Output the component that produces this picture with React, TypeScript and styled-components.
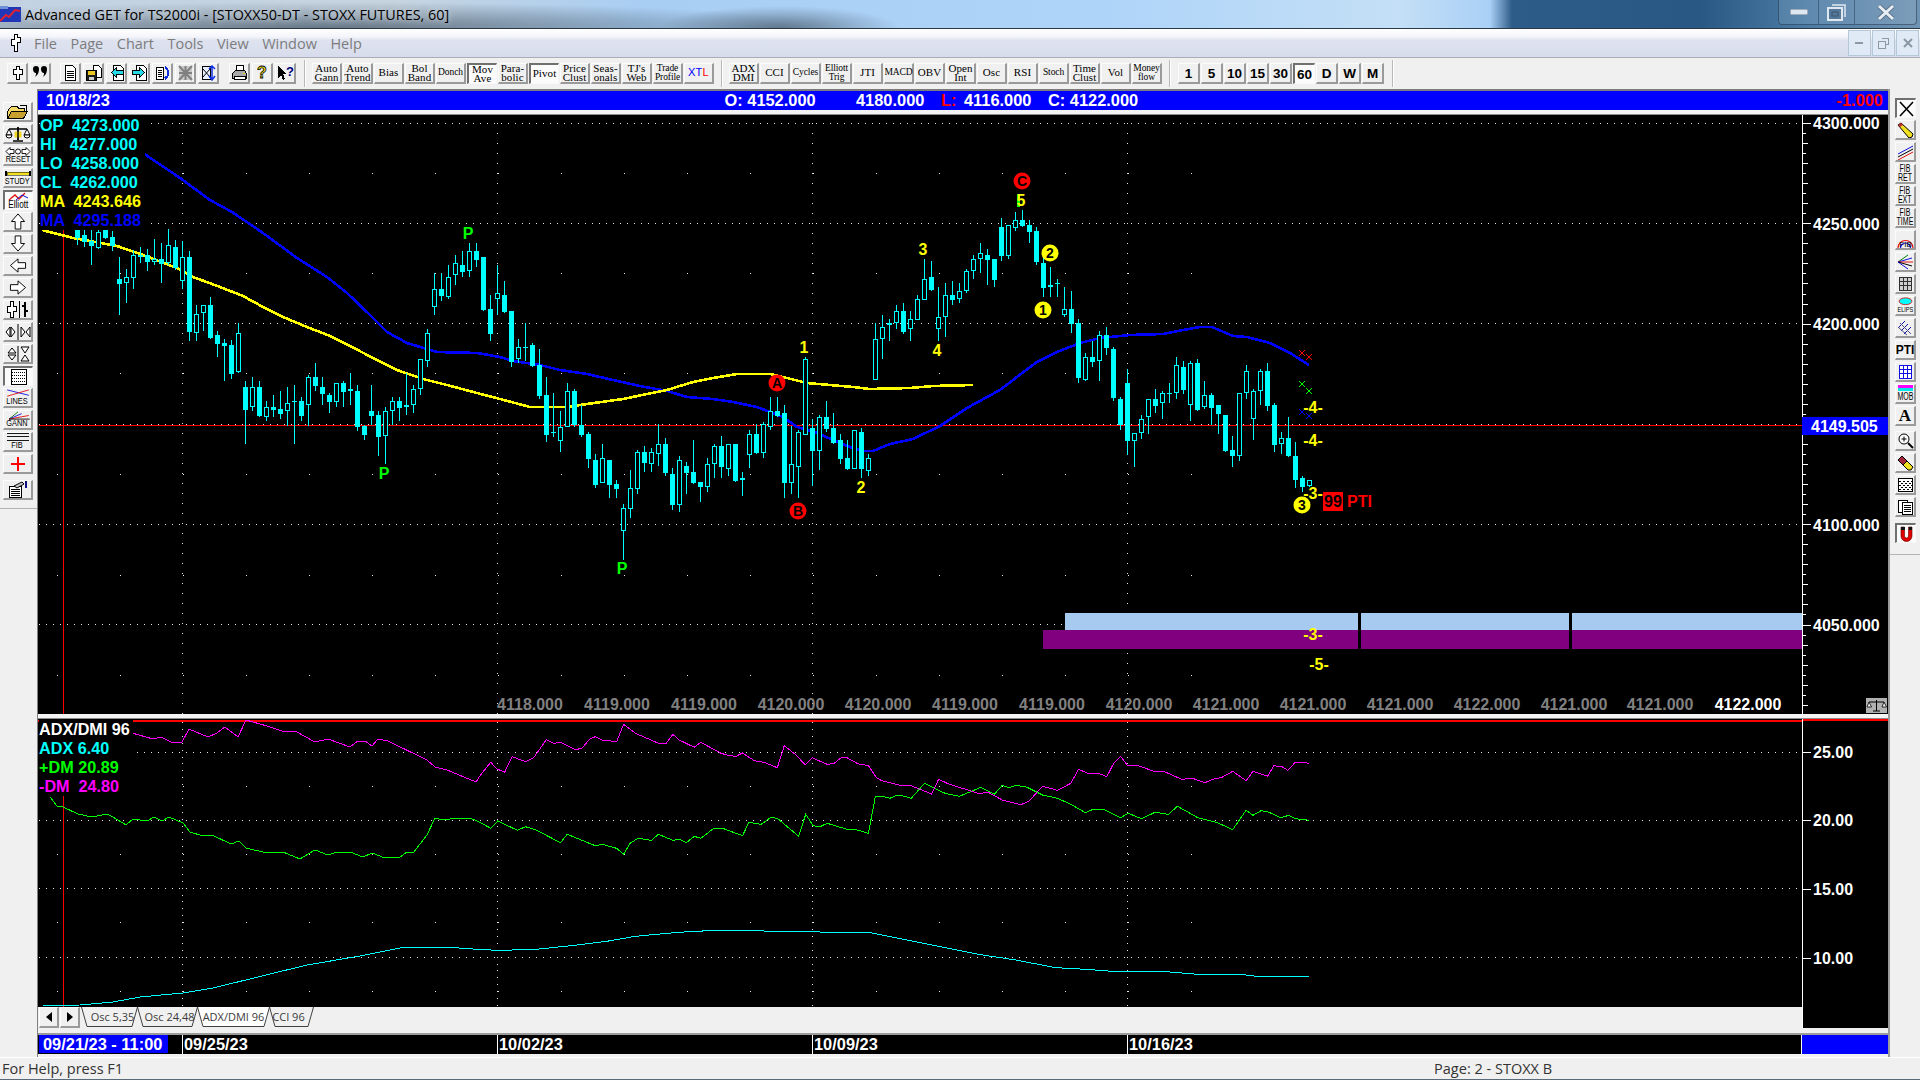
import React from 'react';
import styled, { createGlobalStyle } from 'styled-components';

const GlobalStyle = createGlobalStyle`
  html, body { margin: 0; padding: 0; background: #f0f0f0; overflow: hidden; }
  * { box-sizing: border-box; }
`;

const Shell = styled.div`
  width: 1920px;
  height: 1080px;
  display: flex;
  flex-direction: column;
  overflow: hidden;
  font-family: "Liberation Sans", Arial, sans-serif;
  background: #f0f0f0;
`;

const TitleBar = styled.div`
  height: 29px;
  display: flex;
  align-items: flex-start;
  justify-content: space-between;
  border-bottom: 1px solid #2c3a46;
  background:
    radial-gradient(ellipse 520px 26px at 330px 100%, rgba(70, 88, 105, 0.75), rgba(70, 88, 105, 0) 100%),
    radial-gradient(ellipse 120px 22px at 780px 100%, rgba(70, 88, 105, 0.7), rgba(70, 88, 105, 0) 100%),
    linear-gradient(90deg, #c2d2e2 0, #c6d4e0 400px, #a9cef3 640px, #aed4f9 1100px, #c4dff6 1400px, #a9d0f6 1490px, #2e5c88 1512px, #2a5884 1700px, #4a7aa4 1800px, #6f93b3 1920px);
`;

const TitleLeft = styled.div`
  display: flex;
  align-items: center;
  gap: 4px;
  height: 28px;
`;

const TitleText = styled.span`
  font-family: "Open Sans", sans-serif;
  font-size: 14.4px;
  color: #000;
  text-shadow: 0 0 6px rgba(255, 255, 255, 0.8);
  white-space: nowrap;
`;

const CaptionGroup = styled.div`
  display: flex;
  margin-right: 3px;
  height: 25px;
  border: 1px solid rgba(20, 40, 60, 0.5);
  border-top: none;
  border-radius: 0 0 4px 4px;
  background: rgba(255, 255, 255, 0.1);
`;

const CaptionButton = styled.div<{ $w: number }>`
  width: ${({ $w }) => $w}px;
  display: flex;
  align-items: center;
  justify-content: center;
  & + & { border-left: 1px solid rgba(20, 40, 60, 0.4); }
`;

const MenuBar = styled.div`
  height: 29px;
  display: flex;
  align-items: center;
  padding-left: 8px;
  border-bottom: 1px solid #a8adb6;
  background: linear-gradient(180deg, #ffffff 0, #f4f5fa 28%, #dfe3f0 40%, #d7dcec 100%);
`;

const MenuItems = styled.div`
  display: flex;
  gap: 13.5px;
  margin-left: 9px;
  flex: 1;
`;

const MenuItem = styled.span`
  font-family: "Open Sans", sans-serif;
  font-size: 14.5px;
  color: #7c7c7c;
`;

const MdiButton = styled.div`
  width: 23px;
  height: 26px;
  margin-right: 1px;
  display: flex;
  align-items: center;
  justify-content: center;
  border: 1px solid #b4c8d8;
  background: #dfeaf6;
`;

const ToolBar = styled.div`
  height: 31px;
  display: flex;
  align-items: flex-start;
  padding-top: 5px;
  background: #f0f0f0;
`;

const ToolGroup = styled.div<{ $ml: number; $gap: number }>`
  display: flex;
  gap: ${({ $gap }) => $gap}px;
  margin-left: ${({ $ml }) => $ml}px;
`;

const ToolSep = styled.div<{ $ml: number }>`
  width: 2px;
  height: 27px;
  margin-top: -3px;
  margin-left: ${({ $ml }) => $ml}px;
  border-left: 1px solid #b8b8b8;
  border-right: 1px solid #fff;
`;

const Raised = styled.div<{ $pressed?: boolean }>`
  flex: none;
  display: flex;
  align-items: center;
  justify-content: center;
  flex-direction: column;
  color: #000;
  background: ${({ $pressed }) => ($pressed ? '#fbfbfb' : '#f0f0f0')};
  border-style: solid;
  border-width: ${({ $pressed }) => ($pressed ? '2px 1px 1px 2px' : '1px 2px 2px 1px')};
  border-color: ${({ $pressed }) =>
    $pressed ? '#707070 #f8f8f8 #f8f8f8 #707070' : '#fcfcfc #9a9a9a #9a9a9a #fcfcfc'};
`;

const IconButton = styled(Raised)`
  width: 21px;
  height: 21px;
`;

const TextButton = styled(Raised)<{ $small?: boolean }>`
  width: 30px;
  height: 21px;
  font-family: "Liberation Serif", serif;
  font-size: ${({ $small }) => ($small ? 9.5 : 11)}px;
  line-height: 9.5px;
  text-align: center;
  white-space: pre;
  letter-spacing: ${({ $small }) => ($small ? -0.1 : 0.1)}px;
`;

const NumButton = styled(Raised)`
  width: 22px;
  height: 21px;
  font-size: 13.5px;
  font-weight: 700;
`;

const XtlPart = styled.span<{ $c: string }>`
  color: ${({ $c }) => $c};
  font-family: "Liberation Sans", sans-serif;
  font-size: 11px;
  letter-spacing: 0.3px;
`;

const Body = styled.div`
  flex: 1;
  display: flex;
  min-height: 0;
`;

const SideBar = styled.div<{ $w: number; $pt: number; $pl: number; $h: number }>`
  flex: none;
  width: ${({ $w }) => $w}px;
  height: ${({ $h }) => $h}px;
  padding: ${({ $pt }) => $pt}px 0 0 ${({ $pl }) => $pl}px;
  display: flex;
  flex-direction: column;
  gap: 2px;
  border-bottom: 1px solid #b4b4b4;
`;

const SideButton = styled(Raised)<{ $w: number; $mt?: number }>`
  width: ${({ $w }) => $w}px;
  height: 20px;
  margin-top: ${({ $mt }) => $mt || 0}px;
  font-size: 9px;
  line-height: 9px;
`;

const RightLabel = styled.span`
  display: block;
  font-size: 10px;
  line-height: 8.5px;
  text-align: center;
  white-space: pre;
  transform: scaleX(0.7);
`;

const TinyLabel = styled.span<{ $size?: number }>`
  display: block;
  font-size: ${({ $size }) => $size || 9}px;
  line-height: 9px;
  margin-top: -1px;
  white-space: nowrap;
  transform: scaleX(0.82);
`;

const Center = styled.div`
  width: 1853px;
  display: flex;
  flex-direction: column;
  border-left: 1px solid #808080;
  border-right: 2px solid #9a9a9a;
`;

const InfoBar = styled.div`
  height: 21px;
  display: grid;
  grid-template-columns: 678.5px 131.5px 85px 23px 84px 1fr auto;
  align-items: center;
  padding: 0 5px 0 8px;
  border-top: 2px solid #7c7c7c;
  background: #0000ff;
  color: #fff;
  font-size: 16.4px;
  font-weight: 700;
  white-space: pre;
`;

const RedText = styled.span`
  color: #ff0000;
`;

const PanelGap = styled.div<{ $h: number }>`
  height: ${({ $h }) => $h}px;
  flex: none;
  background: #f4f4f4;
  border-bottom: 1px solid #8c8c8c;
`;

const UpperPanel = styled.div`
  position: relative;
  height: 599px;
  background: #000;
`;

const ChartSvg = styled.svg`
  display: block;
  text {
    font-family: "Liberation Sans", Arial, sans-serif;
    font-size: 16px;
    font-weight: 700;
  }
`;

const Legend = styled.div<{ $w: number; $left: number }>`
  position: absolute;
  left: ${({ $left }) => $left}px;
  top: 0;
  width: ${({ $w }) => $w}px;
  padding-top: 1px;
  background: #000;
  font-size: 16.2px;
  font-weight: 700;
  line-height: 19px;
  white-space: pre;
`;

const LegendRow = styled.div<{ $c: string }>`
  color: ${({ $c }) => $c};
`;

const LowerPanel = styled.div`
  height: 309px;
  display: flex;
  background: #000;
  flex: none;
`;

const LowerPlot = styled.div`
  position: relative;
  width: 1764px;
  display: flex;
  flex-direction: column;
`;

const TabStrip = styled.div`
  height: 21px;
  display: flex;
  align-items: stretch;
  background: #f0f0f0;
  padding-left: 1px;
`;

const TabArrow = styled(Raised)`
  width: 20px;
  height: 21px;
  margin-right: 1px;
`;

const Tab = styled.div<{ $w: number; $shift: number; $active?: boolean }>`
  position: relative;
  width: ${({ $w }) => $w}px;
  margin-right: -1px;
  display: flex;
  align-items: center;
  justify-content: center;
  padding-bottom: 2px;
  font-family: "Open Sans", sans-serif;
  font-size: 11px;
  color: #3a3a3a;
  &:first-of-type { margin-left: 1px; }
  span { position: relative; left: ${({ $shift }) => $shift}px; }
`;

const TabShape = styled.svg`
  position: absolute;
  inset: 0;
  width: 100%;
  height: 100%;
`;

const DateGap = styled.div`
  height: 7px;
  flex: none;
  background: #f0f0f0;
  border-bottom: 2px solid #9c9c9c;
`;

const DateBar = styled.div`
  height: 19px;
  flex: none;
  display: flex;
  background: #000;
  color: #fff;
  font-size: 16.4px;
  font-weight: 700;
  line-height: 19px;
`;

const DateCell = styled.div<{ $w: number }>`
  width: ${({ $w }) => $w}px;
  padding-left: 1px;
  border-left: 1px solid #fff;
  white-space: nowrap;
`;

const DateStart = styled.div`
  width: 144px;
  padding-left: 1px;
`;

const DateStartLabel = styled.span`
  display: inline-block;
  width: 129px;
  height: 18px;
  line-height: 18px;
  padding-left: 4px;
  background: #0000ff;
  white-space: nowrap;
`;

const DateEnd = styled.div`
  flex: 1;
  margin-left: 1px;
  border-left: 1px solid #fff;
  background: #0000ff;
`;

const StatusBar = styled.div`
  height: 23px;
  flex: none;
  position: relative;
  display: flex;
  align-items: center;
  border-top: 1px solid #fff;
  border-bottom: 1px solid #5a6a78;
  background: #f0f0f0;
  font-family: "Open Sans", sans-serif;
  font-size: 14.5px;
  color: #333;
  padding-left: 2px;
`;

const StatusRight = styled.span`
  margin-left: 1311px;
`;

/* ---------- chart data, read off the screen in page pixels ---------- */

type Candle = [number, number, number, number, number];

const rawA: Candle[] = [
  [90,90,115,135,0],[90,105,125,140,0],[90,123,137,195,0],[90,95,143,147,1],[85,90,114,118,0],[93,112,137,152,0],
  [172,238,251,345,0],[208,232,250,308,1],[150,166,233,266,1],[142,165,172,190,1],[148,166,185,212,0],[118,178,185,195,1],
  [130,178,191,248,0],[88,136,190,195,1],[120,142,205,210,0],[124,172,244,266,1],[154,172,395,422,0],[316,341,400,422,1],
  [316,316,340,392,1],[292,316,415,418,0],[394,406,431,470,0],[418,430,437,542,0],[420,436,521,536,0],[370,400,516,518,1],
  [544,562,629,731,0],[532,562,622,632,1],[544,562,648,650,0],[604,622,652,662,1],[586,622,629,650,0],[574,628,641,656,0],
  [562,610,634,678,1],[556,604,606,731,0],[592,604,647,662,0],[526,532,616,678,1],[490,532,557,572,0],[532,562,581,614,0],
  [580,586,605,638,0],[550,550,605,622,1],[544,550,575,620,0],[520,568,574,614,1],[556,574,680,694,0],[674,678,704,719,0],
  [556,634,647,676,0],[634,646,710,767,0],[622,634,709,791,1],[592,604,634,676,1],[592,604,623,662,0],[520,616,622,644,1],
  [556,568,616,638,1],[478,478,568,584,1],[388,400,484,500,1],[220,268,322,344,1],[220,268,287,302,0],[196,232,292,298,1],
  [166,190,226,254,1],[154,196,215,232,0],[130,154,214,230,1],[130,154,179,202,0],[172,172,329,332,0],[286,328,401,422,0],
  [196,280,298,344,1],
];

const rawB: Candle[] = [
  [244,286,335,340,0],[334,334,485,500,0],[418,442,478,490,1],[370,441,443,484,0],[430,436,497,500,0],[448,496,587,597,0],
  [532,586,705,726,0],[580,696,698,712,0],[634,680,722,755,1],[550,574,680,682,1],[568,574,676,680,0],[616,676,705,712,0],
  [696,702,777,803,0],[762,780,855,863,0],[732,775,848,850,1],[780,780,855,893,0],[840,852,867,893,0],[912,925,992,1080,1],
  [810,865,926,953,1],[750,757,866,881,1],[738,757,789,815,0],[744,757,793,815,1],[672,733,763,797,1],[714,733,819,827,0],
  [804,822,915,930,0],[768,781,914,936,1],[786,798,819,881,0],[720,816,849,851,0],[847,847,861,905,0],[774,793,860,875,1],
  [732,739,793,833,1],[708,739,800,833,0],[733,733,806,827,1],[733,733,844,845,0],[817,835,841,887,1],[690,703,764,803,1],
  [672,703,760,762,0],[666,673,758,773,1],[592,634,680,690,1],[592,634,647,650,0],[616,640,849,893,0],[678,793,848,881,1],
  [690,697,800,893,1],[472,478,705,706,1],[658,684,752,857,0],[646,652,752,809,1],[604,652,687,695,0],[640,684,729,731,0],
  [702,720,777,793,0],[720,774,807,809,0],[691,691,806,807,1],[684,696,807,833,0],[762,775,812,827,1],[370,418,540,540,1],
  [346,382,418,476,1],[358,370,376,422,1],[316,334,370,386,1],[310,334,395,403,0],[334,358,388,422,1],[286,298,359,360,1],
  [178,238,299,300,1],[184,232,269,272,0],[262,352,388,422,1],[250,286,352,410,1],[244,286,299,315,0],[250,274,298,308,1],
  [208,214,274,278,1],[166,178,214,238,1],[130,160,178,218,1],[148,166,179,254,0],[178,178,239,260,0],
];

const rawC: Candle[] = [
  [175,202,287,302,0],[196,196,287,296,1],[156,181,203,212,1],[150,181,197,200,0],[181,196,215,248,0],[202,214,305,314,0],
  [290,310,383,410,0],[322,376,382,410,1],[358,369,371,410,0],[382,448,466,470,1],[394,448,491,518,0],[478,490,653,668,0],
  [580,592,660,662,1],[544,592,605,620,0],[514,526,604,662,1],[502,526,563,584,0],[562,568,713,722,0],[712,718,795,809,0],
  [628,670,842,886,0],[818,818,842,922,1],[766,778,818,838,1],[718,718,772,821,1],[688,718,737,760,0],[694,700,730,776,1],
  [670,699,701,730,0],[592,616,700,716,1],[604,622,689,703,0],[604,610,736,782,1],[598,610,749,752,0],[664,706,742,746,1],
  [700,706,743,796,0],[736,736,761,821,0],[766,766,873,876,0],[828,870,889,922,0],[700,700,889,904,1],[616,634,700,716,1],
  [688,694,778,840,1],[628,634,694,735,1],[610,634,737,752,0],[730,736,855,876,0],[816,835,853,881,1],[772,835,889,892,0],
  [847,889,961,985,0],[949,955,981,997,0],[961,961,979,981,1],
];

const toPage = (rows: Candle[], origin: number): Candle[] =>
  rows.map(([a, b, c, d, h]) => [
    Math.round(origin + a / 3),
    Math.round(origin + b / 3),
    Math.round(origin + c / 3),
    Math.round(origin + d / 3),
    h,
  ]);

const candles = [...toPage(rawA, 200), ...toPage(rawB, 200), ...toPage(rawC, 160)];

const blueMa = [
  [143,153],[180,178],[210,200],[232,212],[263,233],[297,258],[327,277],[347,293],[370,315],[387,332],[407,343],[437,352],
  [477,353],[500,357],[513,361],[540,365],[560,370],[587,374],[613,380],[640,386],[667,391],[687,397],[713,399],[733,402],
  [757,407],[770,412],[783,417],[797,427],[817,433],[833,440],[850,447],[863,451],[873,451],[890,444],[913,439],[940,426],
  [967,408],[1000,390],[1017,377],[1037,362],[1057,352],[1080,343],[1100,338],[1130,335],[1163,334],[1183,330],[1200,327],
  [1212,327],[1233,336],[1247,337],[1270,343],[1290,353],[1309,365],
];

const yellowMa = [
  [42,230],[73,238],[117,246],[143,255],[177,268],[193,277],[220,287],[243,296],[263,307],[283,317],[307,327],[330,336],
  [350,346],[377,360],[397,370],[423,379],[447,385],[477,393],[500,399],[530,407],[567,407],[587,404],[623,399],[647,394],
  [667,390],[693,382],[713,378],[737,374],[770,374],[783,377],[807,383],[853,387],[870,389],[910,388],[933,386],[973,385],
];

const magentaLeft = [
  [132,733],[153,739],[161,737],[173,743],[182,742],[189,729],[208,737],[217,733],[225,727],[238,737],[246,720],[267,726],
  [285,732],[295,731],[315,742],[328,739],[350,747],[358,741],[365,741],[372,746],[378,739],[388,741],[427,760],[435,767],
  [447,770],[476,782],
];

const magentaRight = [
  [0,182],[20,142],[32,162],[46,172],[60,125],[85,140],[100,128],[124,74],[138,85],[150,82],[178,104],[190,100],[205,72],
  [215,65],[228,75],[255,80],[268,28],[290,55],[335,86],[347,86],[360,58],[372,75],[400,97],[412,82],[450,115],[465,122],
  [478,124],[490,114],[512,137],[530,142],[555,158],[568,92],[590,120],[607,150],[620,128],[648,148],[660,146],[675,127],
  [685,128],[705,146],[725,152],[740,188],[750,197],[785,211],[805,212],[843,237],[856,193],[875,207],[930,235],[950,233],
  [975,255],[1010,269],[1025,258],[1050,214],[1078,226],[1103,205],[1117,163],[1135,175],[1155,175],[1170,185],[1183,145],
  [1196,124],[1208,150],[1225,150],[1260,170],[1278,170],[1310,193],[1330,190],[1353,203],[1370,192],[1385,187],[1405,169],
  [1430,197],[1443,169],[1470,184],[1482,152],[1497,155],[1508,166],[1522,142],[1540,142],[1548,146],
];

const greenLeft = [
  [50,797],[57,806],[63,807],[78,814],[92,817],[107,814],[113,817],[126,825],[133,819],[147,821],[154,817],[162,821],[169,817],
  [183,823],[190,832],[203,836],[212,835],[231,844],[239,841],[246,848],[267,853],[283,852],[300,859],[315,850],[328,855],
  [337,852],[350,852],[363,857],[372,853],[385,858],[400,857],[407,852],[413,853],[427,835],[435,818],[443,820],[450,819],
  [470,818],
];

const greenRight = [
  [0,322],[20,340],[33,318],[70,346],[85,335],[105,345],[150,383],[163,358],[215,392],[228,388],[255,400],[268,418],[280,385],
  [295,370],[320,376],[333,358],[360,376],[372,373],[385,383],[400,364],[412,370],[435,342],[455,341],[490,362],[502,322],
  [525,328],[543,307],[555,310],[595,364],[608,298],[622,332],[635,335],[648,325],[685,343],[700,343],[725,355],[738,244],
  [750,244],[765,250],[778,241],[790,243],[805,250],[830,205],[868,235],[895,244],[935,217],[960,238],[975,211],[988,218],
  [1000,211],[1020,216],[1050,240],[1078,250],[1103,268],[1130,293],[1143,284],[1165,284],[1196,308],[1210,295],[1235,311],
  [1260,292],[1285,298],[1302,274],[1340,308],[1375,322],[1405,344],[1430,286],[1443,301],[1458,287],[1470,290],[1495,308],
  [1510,301],[1522,311],[1548,316],
];

const cyanLeft = [
  [43,1006],[80,1005],[113,1002],[140,997],[183,993],[213,988],[307,965],[360,956],[400,948],[417,947],[445,947],[473,949],
];

const cyanRight = [
  [0,704],[40,706],[105,703],[170,692],[240,678],[290,664],[370,652],[440,646],[520,646],[540,650],[725,652],[790,673],
  [850,692],[930,718],[1000,735],[1075,758],[1130,763],[1190,770],[1280,770],[1340,778],[1420,778],[1450,784],[1548,784],
];

const fromZoom = (rows: number[][]) => rows.map(([x, y]) => [480 + x / 1.8667, 715 + y / 3]);
const pts = (rows: number[][]) => rows.map(([x, y]) => `${x.toFixed(1)},${y.toFixed(1)}`).join(' ');

const bottomValues = [
  [530,'4118.000'],[617,'4119.000'],[704,'4119.000'],[791,'4120.000'],[878,'4120.000'],[965,'4119.000'],[1052,'4119.000'],
  [1139,'4120.000'],[1226,'4121.000'],[1313,'4121.000'],[1400,'4121.000'],[1487,'4122.000'],[1574,'4121.000'],[1660,'4121.000'],
] as const;

/* ---------- chart parts ---------- */

const Cross = ({ x, y, c }: { x: number; y: number; c: string }) => (
  <path d={`M${x - 3} ${y - 3}l6 6M${x - 3} ${y + 3}l6 -6`} stroke={c} strokeWidth={1} fill="none" />
);

const Ring = ({ x, y, c, t }: { x: number; y: number; c: string; t: string }) => (
  <g>
    <circle cx={x} cy={y} r={8.5} fill={c} />
    <text x={x} y={y + 5} textAnchor="middle" fill="#000" style={{ fontSize: 14 }}>{t}</text>
  </g>
);

const Mark = ({ x, y, c, t }: { x: number; y: number; c: string; t: string }) => (
  <text x={x} y={y + 6} textAnchor="middle" fill={c}>{t}</text>
);

const UpperChart = () => {
  const major = [123, 223, 323, 424, 524, 624];
  const sparse = [173, 273, 373, 474, 575, 675];
  const ticks = Array.from({ length: 60 }, (_, k) => 123 + k * 10.03);
  return (
    <ChartSvg width={1850} height={599} viewBox="38 115 1850 599">
      <g stroke="#e8e8e8" strokeWidth={1} shapeRendering="crispEdges">
        {major.map(y => <line key={y} x1={39} x2={1797} y1={y + 0.5} y2={y + 0.5} strokeDasharray="1 6" />)}
        {sparse.map(y => <line key={y} x1={57} x2={1254} y1={y + 0.5} y2={y + 0.5} strokeDasharray="1 62" />)}
        {[182, 497, 812, 1127].map(x => <line key={x} x1={x + 0.5} x2={x + 0.5} y1={123} y2={714} strokeDasharray="1 9" />)}
      </g>
      <rect x={1065} y={613} width={737} height={17} fill="#a6caf0" />
      <rect x={1043} y={630} width={759} height={19} fill="#800080" />
      <rect x={1358} y={613} width={3} height={36} fill="#000" />
      <rect x={1569} y={613} width={3} height={36} fill="#000" />
      <g fill="#ff0000" shapeRendering="crispEdges">
        <rect x={39} y={425} width={1763} height={1} />
        <rect x={63} y={230} width={1} height={484} />
      </g>
      <g fill="none" strokeWidth={2.6} shapeRendering="crispEdges">
        <polyline points={pts(blueMa)} stroke="#0000ff" />
        <polyline points={pts(yellowMa)} stroke="#ffff00" />
      </g>
      <g shapeRendering="crispEdges">
        {candles.map(([wt, bt, bb, wb, hollow], i) => {
          const cx = 77 + i * 7;
          return (
            <g key={i}>
              <rect x={cx} y={wt} width={1} height={wb - wt} fill="#00ffff" />
              {hollow ? (
                <rect x={cx - 1.5} y={bt + 0.5} width={4} height={Math.max(bb - bt - 1, 1)} fill="#000" stroke="#00ffff" />
              ) : (
                <rect x={cx - 2} y={bt} width={5} height={Math.max(bb - bt, 1)} fill="#00ffff" />
              )}
            </g>
          );
        })}
      </g>
      <Mark x={468} y={233} c="#00ff00" t="P" />
      <Mark x={384} y={473} c="#00ff00" t="P" />
      <Mark x={622} y={568} c="#00ff00" t="P" />
      <Ring x={777} y={383} c="#ff0000" t="A" />
      <Ring x={798} y={511} c="#ff0000" t="B" />
      <Ring x={1022} y={181} c="#ff0000" t="C" />
      <Mark x={804} y={347} c="#ffff00" t="1" />
      <Mark x={861} y={487} c="#ffff00" t="2" />
      <Mark x={923} y={249} c="#ffff00" t="3" />
      <Mark x={937} y={350} c="#ffff00" t="4" />
      <rect x={1017} y={194} width={3} height={13} fill="#00ff00" />
      <Mark x={1021} y={200} c="#ffff00" t="5" />
      <Ring x={1050} y={253} c="#ffff00" t="2" />
      <Ring x={1043} y={310} c="#ffff00" t="1" />
      <Ring x={1302} y={505} c="#ffff00" t="3" />
      <Cross x={1302} y={353} c="#ff0000" />
      <Cross x={1309} y={357} c="#ff0000" />
      <Cross x={1302} y={384} c="#00ff00" />
      <Cross x={1309} y={391} c="#00ff00" />
      <Cross x={1302} y={412} c="#0000ff" />
      <Cross x={1309} y={416} c="#0000ff" />
      <Mark x={1313} y={407} c="#ffff00" t="-4-" />
      <Mark x={1313} y={440} c="#ffff00" t="-4-" />
      <Mark x={1313} y={493} c="#ffff00" t="-3-" />
      <Mark x={1313} y={634} c="#ffff00" t="-3-" />
      <Mark x={1319} y={664} c="#ffff00" t="-5-" />
      <rect x={1323} y={492} width={20} height={19} fill="#ff0000" />
      <text x={1333} y={507} textAnchor="middle" fill="#000">99</text>
      <text x={1347} y={507} fill="#ff0000">PTI</text>
      {bottomValues.map(([x, t], i) => (
        <text key={i} x={x} y={710} textAnchor="middle" fill="#808080">{t}</text>
      ))}
      <text x={1748} y={710} textAnchor="middle" fill="#fff">4122.000</text>

      <rect x={1802} y={115} width={1} height={599} fill="#fff" />
      <g fill="#fff" shapeRendering="crispEdges">
        {ticks.map((y, k) => (
          <rect key={k} x={1803} y={Math.round(y)} width={k % 10 === 0 ? 8 : k % 2 === 0 ? 5 : 3} height={1} />
        ))}
      </g>
      {[[4300, 129], [4250, 230], [4200, 330], [4100, 531], [4050, 631]].map(([v, y]) => (
        <text key={v} x={1813} y={y} fill="#fff">{v}.000</text>
      ))}
      <rect x={1802} y={417} width={86} height={18} fill="#0000ff" />
      <text x={1811} y={432} fill="#fff">4149.505</text>
      <g>
        <rect x={1866} y={698} width={21} height={15} fill="#b0b0b0" />
        <path d="M1869 702h15M1876.5 700v11M1873 711h7" stroke="#000" strokeWidth={1} fill="none" />
        <path d="M1869 702l-2 5h4.500zM1884 702l-2 5h4.500z" stroke="#000" strokeWidth={0.8} fill="#f0f0f0" />
      </g>
    </ChartSvg>
  );
};

const LowerChart = () => {
  const major = [752, 820, 888, 957];
  const sparse = [786, 854, 922, 991];
  return (
    <ChartSvg width={1764} height={288} viewBox="38 719 1764 288">
      <g stroke="#e8e8e8" strokeWidth={1} shapeRendering="crispEdges">
        {major.map(y => <line key={y} x1={39} x2={1797} y1={y + 0.5} y2={y + 0.5} strokeDasharray="1 6" />)}
        {sparse.map(y => <line key={y} x1={57} x2={1254} y1={y + 0.5} y2={y + 0.5} strokeDasharray="1 62" />)}
        {[182, 497, 812, 1127].map(x => <line key={x} x1={x + 0.5} x2={x + 0.5} y1={722} y2={1007} strokeDasharray="1 5.9" />)}
      </g>
      <rect x={38} y={720} width={1764} height={2} fill="#ff0000" />
      <rect x={63} y={722} width={1} height={285} fill="#ff0000" />
      <g fill="none" strokeWidth={1} shapeRendering="crispEdges">
        <polyline points={pts([...cyanLeft, ...fromZoom(cyanRight)])} stroke="#00ffff" />
        <polyline points={pts([...greenLeft, ...fromZoom(greenRight)])} stroke="#00ff00" />
        <polyline points={pts([...magentaLeft, ...fromZoom(magentaRight)])} stroke="#ff00ff" />
      </g>
    </ChartSvg>
  );
};

const LowerAxis = () => (
  <ChartSvg width={86} height={309} viewBox="1802 719 86 309">
    <rect x={1802} y={719} width={86} height={2} fill="#ff0000" />
    <rect x={1802} y={719} width={1} height={309} fill="#fff" />
    {[[25, 752], [20, 820], [15, 889], [10, 958]].map(([v, y]) => (
      <g key={v}>
        <rect x={1803} y={y} width={8} height={1} fill="#fff" />
        <text x={1813} y={y + 6} fill="#fff">{v}.00</text>
      </g>
    ))}
  </ChartSvg>
);

/* ---------- toolbar icons ---------- */

const Ico = ({ w = 17, h = 16, children }: { w?: number; h?: number; children: React.ReactNode }) => (
  <svg width={w} height={h} viewBox={`0 0 ${w} ${h}`} shapeRendering="crispEdges">{children}</svg>
);

const Logo = () => (
  <Ico>
    <path d="M7.5 1.500h3v3h3v5h-3v5h-3v-5h-3v-5h3z" fill="#fff" stroke="#000" />
  </Ico>
);

const Quotes = () => (
  <Ico>
    <g shapeRendering="auto" fill="#000">
      <path d="M1 4a3 3 0 0 1 6 0c0 3-1 6-4 8 1-2 1-3 1-4-2 0-3-2-3-4z" />
      <path d="M9 4a3 3 0 0 1 6 0c0 3-1 6-4 8 1-2 1-3 1-4-2 0-3-2-3-4z" />
    </g>
  </Ico>
);

const Doc = () => (
  <Ico>
    <path d="M3.500 .5h7l3 3v12h-10z" fill="#fff" stroke="#000" />
    <path d="M5 6h7M5 8h7M5 10h7M5 12h7" stroke="#000" />
  </Ico>
);

const Floppy = () => (
  <Ico>
    <path d="M8.500 .5h5l3 3v9h-8z" fill="#fff" stroke="#000" />
    <rect x={1.5} y={5.5} width={10} height={10} fill="#1c1c1c" stroke="#000" />
    <rect x={3} y={6} width={7} height={4} fill="#e8c820" />
    <rect x={4} y={12} width={5} height={3} fill="#d0d0d0" />
  </Ico>
);

const DocArrow = ({ right }: { right?: boolean }) => (
  <Ico>
    <path d="M5.500 .5h7l3 3v12h-10z" fill="#fff" stroke="#000" />
    <path
      d={right ? 'M1.500 5.500h7v-3l5 5-5 5v-3h-7z' : 'M15.500 5.500h-7v-3l-5 5 5 5v-3h7z'}
      fill="#28d8e8"
      stroke="#000"
    />
  </Ico>
);

const DocRefresh = () => (
  <Ico>
    <path d="M2.500 2.500h7v12h-7z" fill="#fff" stroke="#000" />
    <path d="M4 5h4M4 7h4M4 9h4M4 11h4" stroke="#000" />
    <path d="M11 2c4 2 4 10 0 12" fill="none" stroke="#1030e0" strokeWidth={2} />
    <path d="M9 12l3 3v-4z" fill="#1030e0" />
  </Ico>
);

const Hatch = () => (
  <Ico>
    <rect x={2} y={1} width={13} height={14} fill="#c8c8c8" />
    <path d="M2 1l13 14M15 1L2 15M8.500 1v14M2 8h13" stroke="#808080" strokeWidth={2} shapeRendering="auto" />
  </Ico>
);

const DocArrows = () => (
  <Ico>
    <path d="M2.500 1.500h8v13h-8z" fill="#e8f0ff" stroke="#000" />
    <path d="M3 4l7 8M10 4l-7 8" stroke="#000" shapeRendering="auto" />
    <path d="M12 1v13M9 11l3 4 3-4M9 4l3-3 3 3" fill="none" stroke="#1030e0" strokeWidth={1.5} shapeRendering="auto" />
  </Ico>
);

const Printer = () => (
  <Ico>
    <path d="M5.500 .5h7v6h-7z" fill="#fff" stroke="#000" />
    <path d="M1.500 8.500l3-3h9l2 3v5h-14z" fill="#a8a8a8" stroke="#000" />
    <path d="M3.500 11.500h11v3h-11z" fill="#fff" stroke="#000" />
    <rect x={12} y={8} width={2} height={1} fill="#e8d020" />
  </Ico>
);

const HelpMark = styled.span`
  font-size: 16px;
  font-weight: 700;
  line-height: 16px;
  color: #f0e020;
  -webkit-text-stroke: 0.8px #000;
`;

const PointerHelp = () => (
  <Ico>
    <path d="M1 1v12l3-3 2 5 2-1-2-5h4z" fill="#000" />
    <text x={9} y={11} fontSize={13} fontWeight={700} fill="#000080" fontFamily="Liberation Sans">?</text>
  </Ico>
);

const WinLogo = () => (
  <svg width={21} height={17} viewBox="0 0 21 17" shapeRendering="crispEdges">
    <rect x={0} y={1} width={21} height={15} fill="#2038b8" />
    <rect x={0} y={0} width={8} height={3} fill="#6d8fd8" />
    <polyline points="0,15 6,9 9,11 15,4 20,5" fill="none" stroke="#e02030" strokeWidth={2} shapeRendering="auto" />
  </svg>
);

const MenuGlyph = () => (
  <svg width={17} height={20} viewBox="0 0 17 20" shapeRendering="crispEdges">
    <path d="M6.500 1.500h3v3h3v5h-3v9h-3v-6h-3v-6h3z" fill="#fff" stroke="#000" strokeWidth={1.4} />
  </svg>
);

/* left column */

const FolderIcon = () => (
  <Ico w={24} h={16}>
    <path d="M3.500 4.500l2-2h6l1 2h6v3h-13l-4 7v-7z" fill="#f4d868" stroke="#000" />
    <path d="M1.500 14.500l4-7h16l-4 7z" fill="#c8a030" stroke="#000" />
    <path d="M14 1h6v6" fill="none" stroke="#000" />
  </Ico>
);

const ScaleIcon = () => (
  <Ico w={26} h={16}>
    <g shapeRendering="auto" fill="none" stroke="#000">
      <path d="M4 3h18M13 1v13M8 15h10" strokeWidth={1.4} />
      <path d="M4 3l-3 6h6zM22 3l-3 6h6z" fill="#fff" />
      <path d="M1 9a3 3 0 0 0 6 0zM19 9a3 3 0 0 0 6 0z" fill="#fff" />
      <path d="M10 6h6v5h-6z" fill="#f0d820" stroke="#f0d820" />
      <path d="M13 1v13" strokeWidth={1.4} />
    </g>
  </Ico>
);

const ResetIcon = () => (
  <>
    <Ico w={26} h={9}>
      <g shapeRendering="auto" fill="#fff" stroke="#000" strokeWidth={0.9}>
        <path d="M1 4.500l4-4v2h4v4h-4v2z" />
        <path d="M25 4.500l-4-4v2h-4v4h4v2z" />
        <circle cx={13} cy={4.5} r={2.5} />
      </g>
    </Ico>
    <TinyLabel>RESET</TinyLabel>
  </>
);

const StudyIcon = () => (
  <>
    <Ico w={26} h={9}>
      <path d="M1 2v5M25 2v5" stroke="#000" strokeWidth={2} />
      <rect x={2} y={3} width={22} height={3} fill="#f0e020" stroke="#000" strokeWidth={0.5} />
    </Ico>
    <TinyLabel>STUDY</TinyLabel>
  </>
);

const ElliottIcon = () => (
  <>
    <Ico w={26} h={9}>
      <polyline points="3,8 9,3 13,7 19,1" fill="none" stroke="#e01010" strokeWidth={1.3} shapeRendering="auto" />
      <polyline points="10,8 16,3 22,6" fill="none" stroke="#1010d0" strokeWidth={1} shapeRendering="auto" />
    </Ico>
    <TinyLabel $size={10}>Elliott</TinyLabel>
  </>
);

const ArrowIcon = ({ d }: { d: string }) => (
  <Ico w={18} h={18}>
    <path d={d} fill="#fff" stroke="#000" strokeWidth={1} shapeRendering="auto" />
  </Ico>
);

const BarsIcon = () => (
  <Ico w={26} h={17}>
    <path d="M5.500 .5h3v5h3v5h-3v6h-3v-5h-3v-6h3z" fill="#fff" stroke="#000" />
    <path d="M14 0v17" stroke="#000" />
    <path d="M20 1v15M17 5h3M20 10h3" stroke="#000" strokeWidth={1.4} />
  </Ico>
);

const HorizIcon = () => (
  <Ico w={26} h={16}>
    <g shapeRendering="auto">
      <path d="M13 0v16" stroke="#000" />
      <path d="M1 8l4-5v10zM6 3l4 5-4 5zM16 3l4 5-4 5zM25 3l-4 5 4 5z" fill="#fff" stroke="#000" />
    </g>
  </Ico>
);

const VertIcon = () => (
  <Ico w={26} h={16}>
    <g shapeRendering="auto">
      <path d="M13 0v16" stroke="#000" />
      <path d="M3 7l4-5 4 5zM3 9h8l-4 5z" fill="#fff" stroke="#000" />
      <path d="M16 1h8l-4 6zM16 15h8l-4-6z" fill="#fff" stroke="#000" />
    </g>
  </Ico>
);

const DotGridIcon = () => (
  <Ico w={18} h={16}>
    <rect x={1.5} y={.5} width={15} height={15} fill="#fff" stroke="#000" />
    <path d="M2 3h14M2 6h14M2 9h14M2 12h14" stroke="#000" strokeDasharray="1 1" />
  </Ico>
);

const LinesIcon = () => (
  <>
    <Ico w={26} h={10}>
      <g shapeRendering="auto" fill="none" strokeWidth={1}>
        <path d="M1 1l24 6" stroke="#1010e0" />
        <path d="M1 8l24-7" stroke="#e01010" />
      </g>
    </Ico>
    <TinyLabel>LINES</TinyLabel>
  </>
);

const GannIcon = () => (
  <>
    <Ico w={26} h={10}>
      <g shapeRendering="auto" fill="none" strokeWidth={1}>
        <path d="M3 9l10-8" stroke="#008000" />
        <path d="M3 9l14-6" stroke="#1010e0" />
        <path d="M3 9l22-4" stroke="#e01010" />
        <path d="M3 9h23" stroke="#000" />
      </g>
    </Ico>
    <TinyLabel>GANN</TinyLabel>
  </>
);

const FibIcon = () => (
  <>
    <Ico w={26} h={10}>
      <path d="M1 1h24M1 4h24M1 8h24" stroke="#000" />
    </Ico>
    <TinyLabel>FIB</TinyLabel>
  </>
);

const RedCross = () => (
  <Ico w={18} h={16}>
    <path d="M9 1v14M2 8h14" stroke="#ff0000" strokeWidth={2} />
  </Ico>
);

const PropsIcon = () => (
  <Ico w={24} h={17}>
    <path d="M3.500 5.500h12v11h-12z" fill="#fff" stroke="#000" />
    <path d="M5 8h9M5 10h9M5 12h9M5 14h9" stroke="#000" />
    <path d="M8 5l8-4 2 2-7 4z" fill="#c8c8c8" stroke="#000" shapeRendering="auto" />
    <rect x={19} y={0} width={2} height={7} fill="#101080" />
  </Ico>
);

/* right column */

const CloseCrossIcon = () => (
  <Ico>
    <path d="M2 1l13 14M15 1L2 15" stroke="#000" strokeWidth={1.6} shapeRendering="auto" />
  </Ico>
);

const PencilIcon = () => (
  <Ico>
    <g shapeRendering="auto">
      <path d="M1 3l3-2 12 11-1 3-3 1z" fill="#f0e020" stroke="#000" />
      <path d="M1 3l3-2 2 2-3 2z" fill="#c03030" />
    </g>
  </Ico>
);

const ParallelIcon = () => (
  <Ico>
    <g shapeRendering="auto" fill="none">
      <path d="M1 10L16 2" stroke="#1010e0" />
      <path d="M1 13L16 5" stroke="#000" />
      <path d="M1 16L16 8" stroke="#e01010" />
    </g>
  </Ico>
);

const ArcIcon = () => (
  <svg width={17} height={16} viewBox="0 0 17 16">
    <path d="M1 16a7.500 7.500 0 0 1 15 0" fill="none" stroke="#e01010" strokeWidth={1.2} />
    <path d="M3.500 16a5 5 0 0 1 10 0" fill="none" stroke="#1010e0" strokeWidth={1.2} />
    <text x={8.5} y={15} textAnchor="middle" fontSize={8} fontFamily="Liberation Sans" fill="#000">FIB</text>
  </svg>
);

const FanIcon = () => (
  <Ico>
    <g shapeRendering="auto" fill="none">
      <path d="M1 8l10-7" stroke="#008000" />
      <path d="M1 8l14-4" stroke="#1010e0" />
      <path d="M1 8h15" stroke="#e01010" />
      <path d="M1 8l14 4" stroke="#000" />
      <path d="M1 8l10 7" stroke="#1010e0" />
    </g>
  </Ico>
);

const GridIcon = ({ c, fill }: { c: string; fill: string }) => (
  <Ico>
    <rect x={2.5} y={1.5} width={12} height={13} fill={fill} stroke={c} />
    <path d="M2.500 5.500h12M2.500 9.500h12M6.500 1.500v13M10.500 1.500v13" stroke={c} />
  </Ico>
);

const EllipseIcon = () => (
  <>
    <svg width={17} height={10} viewBox="0 0 17 10">
      <ellipse cx={8.5} cy={5} rx={7.5} ry={4} fill="#00ffff" stroke="#e01010" />
    </svg>
    <RightLabel style={{ fontSize: 8 }}>ELIPS</RightLabel>
  </>
);

const ForkIcon = () => (
  <Ico>
    <g shapeRendering="auto" fill="none" stroke="#1010a0">
      <path d="M1 8l7-7M4 11l7-7M7 14l7-7" />
      <path d="M3 3l11 11M1 7l9 8" stroke="#505080" />
    </g>
  </Ico>
);

const MobIcon = () => (
  <>
    <svg width={17} height={8} viewBox="0 0 17 8" shapeRendering="crispEdges">
      <rect x={1} y={0} width={15} height={3} fill="#ff00ff" />
      <rect x={1} y={3} width={15} height={3} fill="#00e8e8" />
    </svg>
    <RightLabel>MOB</RightLabel>
  </>
);

const SerifA = styled.span`
  font-family: "Liberation Serif", serif;
  font-size: 17px;
  font-weight: 700;
  line-height: 17px;
`;

const PtiLabel = styled.strong`
  font-size: 12px;
  line-height: 12px;
`;

const ZoomIcon = () => (
  <Ico>
    <g shapeRendering="auto" fill="none" stroke="#000">
      <circle cx={7} cy={6} r={5} fill="#fff" />
      <path d="M11 10l5 5" strokeWidth={2} />
      <path d="M4.500 6h5M7 3.500v5" />
    </g>
  </Ico>
);

const EraserIcon = () => (
  <Ico>
    <g shapeRendering="auto">
      <path d="M1 5l4-4 5 5-4 4z" fill="#a02838" stroke="#000" />
      <path d="M6 10l4-4 6 6-2 3-3 0z" fill="#f0e020" stroke="#000" />
    </g>
  </Ico>
);

const CheckerIcon = () => (
  <Ico>
    <rect x={1.5} y={1.5} width={14} height={13} fill="#fff" stroke="#000" />
    <path d="M2 4h13M2 8h13M2 12h13" stroke="#000" strokeDasharray="2 2" />
    <path d="M2 6h13M2 10h13" stroke="#000" strokeDasharray="2 2" strokeDashoffset={2} />
  </Ico>
);

const PagesIcon = () => (
  <Ico>
    <path d="M1.500 1.500h9v12h-9z" fill="#fff" stroke="#000" />
    <path d="M5.500 3.500h10v12h-10z" fill="#fff" stroke="#000" />
    <path d="M7 6h7M7 8h7M7 10h7M7 12h7" stroke="#000" />
  </Ico>
);

const MagnetIcon = () => (
  <Ico>
    <path d="M3 1v9a5.500 5.500 0 0 0 11 0V1h-3.500v9a2 2 0 0 1-4 0V1z" fill="#e00000" stroke="#600" strokeWidth={0.6} shapeRendering="auto" />
    <rect x={3} y={1} width={3.5} height={3} fill="#111" />
    <rect x={10.5} y={1} width={3.5} height={3} fill="#111" />
  </Ico>
);

const topIcons: [number, React.ReactNode[]][] = [
  [7, [<Logo />, <Quotes />]],
  [9, [<Doc />, <Floppy />, <DocArrow />, <DocArrow right />, <DocRefresh />, <Hatch />, <DocArrows />]],
  [10, [<Printer />, <HelpMark>?</HelpMark>, <PointerHelp />]],
];

const studyButtons = [
  'Auto\nGann', 'Auto\nTrend', 'Bias', 'Bol\nBand', 'Donch', 'Mov\nAve', 'Para-\nbolic', 'Pivot',
  'Price\nClust', 'Seas-\nonals', "TJ's\nWeb", 'Trade\nProfile',
];

const indicatorButtons = [
  'ADX\nDMI', 'CCI', 'Cycles', 'Elliott\nTrig', 'JTI', 'MACD', 'OBV', 'Open\nInt', 'Osc', 'RSI', 'Stoch', 'Time\nClust', 'Vol', 'Money\nflow',
];

const smallButtons = ['Donch', 'Cycles', 'MACD', 'Elliott\nTrig', 'Stoch', 'Trade\nProfile', 'Money\nflow'];

const periods = ['1', '5', '10', '15', '30', '60', 'D', 'W', 'M'];

const leftTools: { icon: React.ReactNode; pressed?: boolean; mt?: number }[] = [
  { icon: <FolderIcon /> },
  { icon: <ScaleIcon /> },
  { icon: <ResetIcon /> },
  { icon: <StudyIcon /> },
  { icon: <ElliottIcon />, pressed: true },
  { icon: <ArrowIcon d="M9 1l7 8h-4v8H6V9H2z" /> },
  { icon: <ArrowIcon d="M9 17l7-8h-4V1H6v8H2z" /> },
  { icon: <ArrowIcon d="M1 9l8-7v4h8v6H9v4z" /> },
  { icon: <ArrowIcon d="M17 9L9 2v4H1v6h8v4z" /> },
  { icon: <BarsIcon /> },
  { icon: <HorizIcon /> },
  { icon: <VertIcon /> },
  { icon: <DotGridIcon />, pressed: true },
  { icon: <LinesIcon /> },
  { icon: <GannIcon /> },
  { icon: <FibIcon /> },
  { icon: <RedCross /> },
  { icon: <PropsIcon />, mt: 4 },
];

const rightTools: { icon: React.ReactNode; pressed?: boolean; mt?: number }[] = [
  { icon: <CloseCrossIcon />, pressed: true },
  { icon: <PencilIcon /> },
  { icon: <ParallelIcon /> },
  { icon: <RightLabel>{'FIB\nRET'}</RightLabel> },
  { icon: <RightLabel>{'FIB\nEXT'}</RightLabel> },
  { icon: <RightLabel>{'FIB\nTIME'}</RightLabel> },
  { icon: <ArcIcon /> },
  { icon: <FanIcon /> },
  { icon: <GridIcon c="#303030" fill="#d0d0d0" /> },
  { icon: <EllipseIcon /> },
  { icon: <ForkIcon /> },
  { icon: <PtiLabel>PTI</PtiLabel> },
  { icon: <GridIcon c="#1010e0" fill="#fff" /> },
  { icon: <MobIcon /> },
  { icon: <SerifA>A</SerifA> },
  { icon: <ZoomIcon />, mt: 3 },
  { icon: <EraserIcon /> },
  { icon: <CheckerIcon /> },
  { icon: <PagesIcon /> },
  { icon: <MagnetIcon />, pressed: true, mt: 4 },
];

const tabs = [
  { label: 'Osc 5,35', w: 57, shift: 3 },
  { label: 'Osc 24,48', w: 61, shift: 2 },
  { label: 'ADX/DMI 96', w: 73, shift: 0 },
  { label: 'CCI 96', w: 45, shift: -3 },
];

const legendUpper = [
  ['OP  4273.000', '#00ffff'],
  ['HI   4277.000', '#00ffff'],
  ['LO  4258.000', '#00ffff'],
  ['CL  4262.000', '#00ffff'],
  ['MA  4243.646', '#ffff00'],
  ['MA  4295.188', '#0000ff'],
];

const legendLower = [
  ['ADX/DMI 96', '#ffffff'],
  ['ADX 6.40', '#00ffff'],
  ['+DM 20.89', '#00ff00'],
  ['-DM  24.80', '#ff00ff'],
];

export default function App() {
  return (
    <Shell>
      <GlobalStyle />
      <TitleBar>
        <TitleLeft>
          <WinLogo />
          <TitleText>Advanced GET for TS2000i - [STOXX50-DT - STOXX FUTURES, 60]</TitleText>
        </TitleLeft>
        <CaptionGroup>
          <CaptionButton $w={39}>
            <svg width={18} height={6}><rect width={18} height={6} fill="#dfe8f0" stroke="#5a7088" /></svg>
          </CaptionButton>
          <CaptionButton $w={36}>
            <svg width={19} height={17} viewBox="0 0 19 17">
              <path d="M5 1h13v12" fill="none" stroke="#dfe8f0" strokeWidth={1.5} />
              <rect x={1} y={4} width={14} height={12} fill="rgba(60,90,120,.4)" stroke="#dfe8f0" strokeWidth={2} />
              <rect x={5} y={8} width={6} height={4} fill="none" stroke="#3c5670" />
            </svg>
          </CaptionButton>
          <CaptionButton $w={62}>
            <svg width={18} height={17} viewBox="0 0 18 17">
              <path d="M2 2l14 13M16 2L2 15" stroke="#5a7088" strokeWidth={4.6} />
              <path d="M2 2l14 13M16 2L2 15" stroke="#e6edf3" strokeWidth={3} />
            </svg>
          </CaptionButton>
        </CaptionGroup>
      </TitleBar>

      <MenuBar>
        <MenuGlyph />
        <MenuItems>
          {['File', 'Page', 'Chart', 'Tools', 'View', 'Window', 'Help'].map(m => <MenuItem key={m}>{m}</MenuItem>)}
        </MenuItems>
        <MdiButton>
          <svg width={9} height={4}><rect y={1} width={8} height={2} fill="#8c98a4" /></svg>
        </MdiButton>
        <MdiButton>
          <svg width={11} height={11} viewBox="0 0 11 11" shapeRendering="crispEdges">
            <path d="M3.500 .5h7v6h-3M.5 3.500h7v7h-7z" fill="none" stroke="#8c98a4" />
          </svg>
        </MdiButton>
        <MdiButton>
          <svg width={10} height={10} viewBox="0 0 10 10">
            <path d="M1 1l8 8M9 1l-8 8" stroke="#8c98a4" strokeWidth={2} />
          </svg>
        </MdiButton>
      </MenuBar>

      <ToolBar>
        {topIcons.map(([ml, icons], g) => (
          <ToolGroup key={g} $ml={ml} $gap={2}>
            {icons.map((icon, i) => <IconButton key={i}>{icon}</IconButton>)}
          </ToolGroup>
        ))}
        <ToolSep $ml={8} />
        <ToolGroup $ml={6} $gap={1}>
          {studyButtons.map(t => (
            <TextButton key={t} $small={smallButtons.includes(t)} $pressed={t === 'Mov\nAve' || t === 'Pivot'}>{t}</TextButton>
          ))}
          <TextButton>
            <span>
              <XtlPart $c="#0000ff">XT</XtlPart><XtlPart $c="#ff0000">L</XtlPart>
            </span>
          </TextButton>
        </ToolGroup>
        <ToolSep $ml={7} />
        <ToolGroup $ml={6} $gap={1}>
          {indicatorButtons.map(t => <TextButton key={t} $small={smallButtons.includes(t)}>{t}</TextButton>)}
        </ToolGroup>
        <ToolSep $ml={7} />
        <ToolGroup $ml={7} $gap={1}>
          {periods.map(p => <NumButton key={p} $pressed={p === '60'}>{p}</NumButton>)}
        </ToolGroup>
        <ToolSep $ml={8} />
      </ToolBar>

      <Body>
        <SideBar $w={37} $pt={13} $pl={3} $h={420}>
          {leftTools.map((t, i) => (
            <SideButton key={i} $w={30} $pressed={t.pressed} $mt={t.mt}>{t.icon}</SideButton>
          ))}
        </SideBar>

        <Center>
          <InfoBar>
            <span>10/18/23</span>
            <span>O: 4152.000</span>
            <span>4180.000</span>
            <RedText>L:</RedText>
            <span>4116.000</span>
            <span>C: 4122.000</span>
            <RedText>-1.000</RedText>
          </InfoBar>
          <PanelGap $h={5} />
          <UpperPanel>
            <UpperChart />
            <Legend $w={105} $left={2}>
              {legendUpper.map(([t, c]) => <LegendRow key={c + t} $c={c}>{t}</LegendRow>)}
            </Legend>
          </UpperPanel>
          <PanelGap $h={5} />
          <LowerPanel>
            <LowerPlot>
              <LowerChart />
              <Legend $w={94} $left={1}>
                {legendLower.map(([t, c]) => <LegendRow key={t} $c={c}>{t}</LegendRow>)}
              </Legend>
              <TabStrip>
                <TabArrow>
                  <svg width={8} height={10}><path d="M7 0v10L1 5z" fill="#000" /></svg>
                </TabArrow>
                <TabArrow>
                  <svg width={8} height={10}><path d="M1 0v10l6-5z" fill="#000" /></svg>
                </TabArrow>
                {tabs.map(t => (
                  <Tab key={t.label} $w={t.w} $shift={t.shift}>
                    <TabShape viewBox={`0 0 ${t.w} 21`} preserveAspectRatio="none">
                      <path
                        d={`M.5 0L6 19.500H${t.w - 6}L${t.w - 0.5} 0`}
                        fill={t.label === 'ADX/DMI 96' ? '#fff' : '#f0f0f0'}
                        stroke="#404040"
                      />
                    </TabShape>
                    <span>{t.label}</span>
                  </Tab>
                ))}
              </TabStrip>
            </LowerPlot>
            <LowerAxis />
          </LowerPanel>
          <DateGap />
          <DateBar>
            <DateStart><DateStartLabel>09/21/23 - 11:00</DateStartLabel></DateStart>
            <DateCell $w={315}>09/25/23</DateCell>
            <DateCell $w={315}>10/02/23</DateCell>
            <DateCell $w={315}>10/09/23</DateCell>
            <DateCell $w={673}>10/16/23</DateCell>
            <DateEnd />
          </DateBar>
        </Center>

        <SideBar $w={30} $pt={9} $pl={5} $h={466}>
          {rightTools.map((t, i) => (
            <SideButton key={i} $w={21} $pressed={t.pressed} $mt={t.mt}>{t.icon}</SideButton>
          ))}
        </SideBar>
      </Body>

      <StatusBar>
        <span>For Help, press F1</span>
        <StatusRight>Page: 2 - STOXX B</StatusRight>
      </StatusBar>
    </Shell>
  );
}
